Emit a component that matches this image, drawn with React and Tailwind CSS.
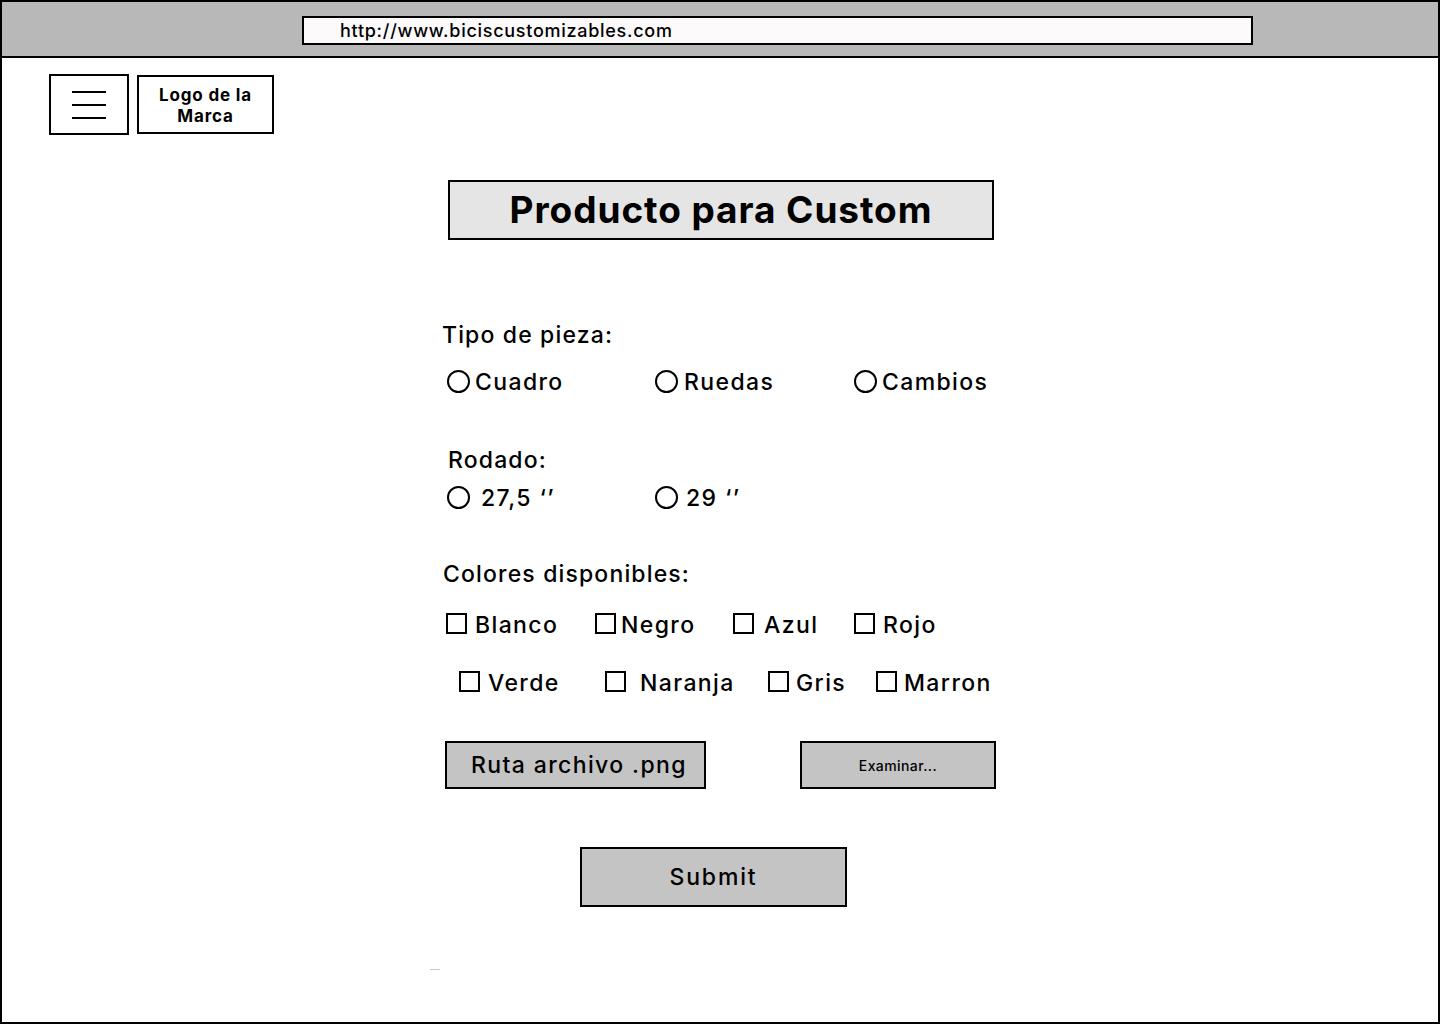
const font = { fontFamily: 'Inter, "Open Sans", "Liberation Sans", sans-serif' };

function Radio({ label, className = "", gap = "ml-[5px]" }) {
  return (
    <div className={`flex h-[28px] items-center ${className}`}>
      <span className="h-[23px] w-[23px] shrink-0 rounded-full border-2 border-black" />
      <span className={`${gap} mt-[2px] text-[23px] font-medium tracking-[0.06em] text-black`}>{label}</span>
    </div>
  );
}

function Check({ label, className = "", gap = "ml-[8px]" }) {
  return (
    <div className={`flex h-[28px] items-center ${className}`}>
      <span className="-mt-[2px] h-[21px] w-[21px] shrink-0 border-2 border-black" />
      <span className={`${gap} mt-[2px] text-[23px] font-medium tracking-[0.06em] text-black`}>{label}</span>
    </div>
  );
}

export default function App() {
  return (
    <div className="flex h-[1024px] w-[1440px] flex-col border-2 border-black bg-white text-black" style={font}>
      {/* browser chrome */}
      <div className="h-[56px] shrink-0 border-b-2 border-black bg-[#b8b8b8] pl-[300px] pt-[14px]">
        <div className="flex h-[29px] w-[951px] items-center border-2 border-black bg-[#fcfafb] pl-[36px] text-[18px] font-medium tracking-[0.04em]">
          http://www.biciscustomizables.com
        </div>
      </div>

      {/* nav */}
      <div className="ml-[47px] mt-[16px] flex items-start gap-[8px]">
        <div className="flex h-[61px] w-[80px] flex-col items-center justify-center gap-[11px] border-2 border-black">
          <span className="h-[2px] w-[34px] bg-black" />
          <span className="h-[2px] w-[34px] bg-black" />
          <span className="h-[2px] w-[34px] bg-black" />
        </div>
        <div className="mt-[1px] flex h-[59px] w-[137px] items-center justify-center border-2 border-black pt-[3px] text-center text-[17px] font-bold leading-[21px] tracking-[0.05em]">
          Logo de la
          <br />
          Marca
        </div>
      </div>

      {/* title */}
      <div className="ml-[446px] mt-[45px] flex h-[60px] w-[546px] items-center justify-center border-2 border-black bg-[#e5e5e5] text-[37px] font-bold tracking-[0.025em]">
        Producto para Custom
      </div>

      {/* form */}
      <div className="ml-[440px] mt-[81px] flex flex-col">
        <div className="h-[28px] text-[23px] font-medium leading-[28px] tracking-[0.05em]">Tipo de pieza:</div>
        <div className="mt-[18px] flex">
          <Radio label="Cuadro" className="ml-[5px] w-[208px]" gap="ml-[5px]" />
          <Radio label="Ruedas" className="w-[199px]" gap="ml-[6px]" />
          <Radio label="Cambios" gap="ml-[5px]" />
        </div>

        <div className="ml-[6px] mt-[51px] h-[28px] text-[23px] font-medium leading-[28px] tracking-[0.05em]">Rodado:</div>
        <div className="mt-[9px] flex">
          <Radio label="27,5 ‘’" className="ml-[5px] w-[208px]" gap="ml-[11px]" />
          <Radio label="29 ‘’" gap="ml-[8px]" />
        </div>

        <div className="ml-[1px] mt-[49px] h-[28px] text-[23px] font-medium leading-[28px] tracking-[0.05em]">Colores disponibles:</div>
        <div className="mt-[22px] flex">
          <Check label="Blanco" className="ml-[4px] w-[149px]" gap="ml-[8px]" />
          <Check label="Negro" className="w-[138px]" gap="ml-[5px]" />
          <Check label="Azul" className="w-[121px]" gap="ml-[10px]" />
          <Check label="Rojo" gap="ml-[8px]" />
        </div>
        <div className="mt-[30px] flex">
          <Check label="Verde" className="ml-[17px] w-[146px]" gap="ml-[8px]" />
          <Check label="Naranja" className="w-[163px]" gap="ml-[14px]" />
          <Check label="Gris" className="w-[108px]" gap="ml-[7px]" />
          <Check label="Marron" gap="ml-[7px]" />
        </div>

        <div className="mt-[45px] flex items-start">
          <div className="ml-[3px] flex h-[48px] w-[261px] items-center border-2 border-black bg-[#c4c4c4] pl-[24px] text-[23px] font-medium tracking-[0.06em]">
            Ruta archivo .png
          </div>
          <div className="ml-[94px] flex h-[48px] w-[196px] items-center justify-center border-2 border-black bg-[#c4c4c4] text-[14px] font-medium tracking-[0.03em]">
            Examinar...
          </div>
        </div>

        <div className="ml-[138px] mt-[58px] flex h-[60px] w-[267px] items-center justify-center border-2 border-black bg-[#c4c4c4] text-[23px] font-medium tracking-[0.08em]">
          Submit
        </div>

        <div className="-ml-[12px] mt-[62px] h-[1px] w-[10px] bg-[#c8c8c8]" />
      </div>
    </div>
  );
}
